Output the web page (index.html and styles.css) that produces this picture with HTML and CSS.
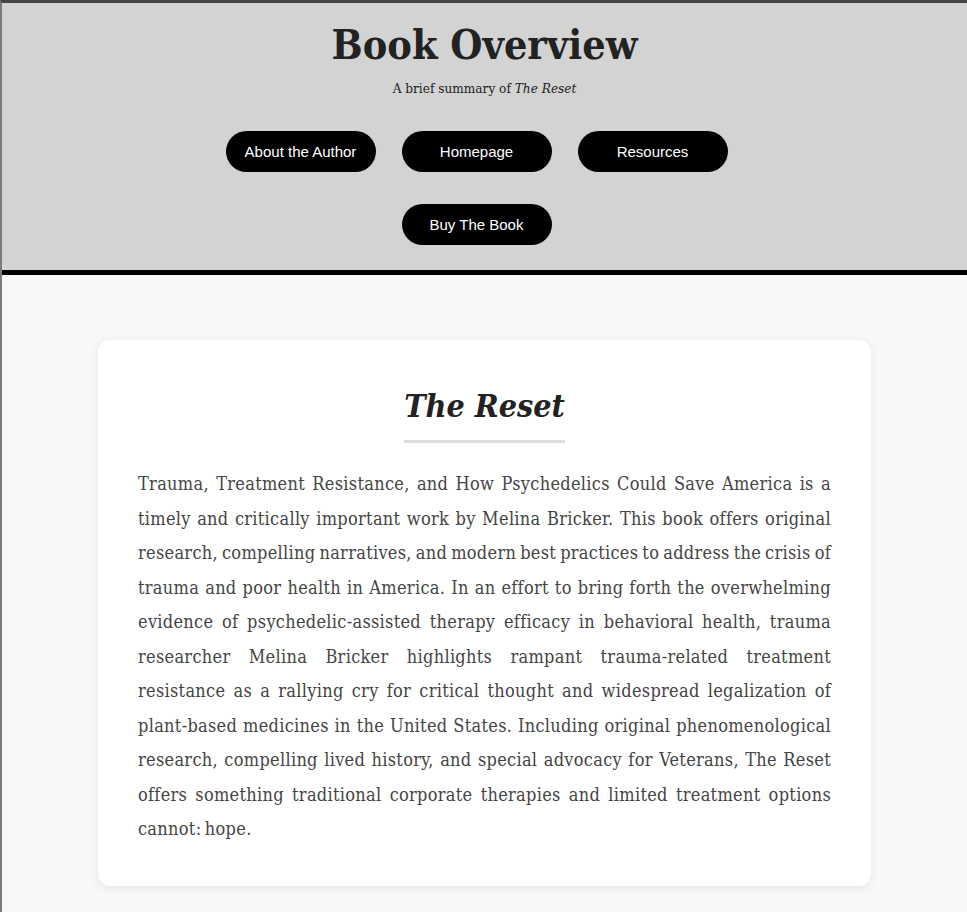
FILE: index.html
```html
<!DOCTYPE html>
<html lang="en">
<head>
<meta charset="utf-8">
<title>Book Overview</title>
<link rel="stylesheet" href="styles.css">
</head>
<body>
<div class="page">
  <header class="site-header">
    <h1 class="site-title">Book Overview</h1>
    <p class="site-subtitle">A brief summary of <em>The Reset</em></p>
    <nav class="nav">
      <a class="nav-btn" href="#">About the Author</a>
      <a class="nav-btn" href="#">Homepage</a>
      <a class="nav-btn" href="#">Resources</a>
      <a class="nav-btn" href="#">Buy The Book</a>
    </nav>
  </header>
  <main class="main">
    <section class="card">
      <div class="card-head">
        <h2 class="card-title">The Reset</h2>
      </div>
      <p class="card-text">Trauma, Treatment Resistance, and How Psychedelics Could Save America is a timely and critically important work by Melina Bricker. This book offers original research, compelling narratives, and modern best practices to address the crisis of trauma and poor health in America. In an effort to bring forth the overwhelming evidence of psychedelic-assisted therapy efficacy in behavioral health, trauma researcher Melina Bricker highlights rampant trauma-related treatment resistance as a rallying cry for critical thought and widespread legalization of plant-based medicines in the United States. Including original phenomenological research, compelling lived history, and special advocacy for Veterans, The Reset offers something traditional corporate therapies and limited treatment options cannot: hope.</p>
    </section>
  </main>
</div>
</body>
</html>
```

FILE: styles.css
```css
html, body {
  margin: 0;
  padding: 0;
}
body {
  background: #f8f8f8;
  font-family: "DejaVu Serif", "Liberation Serif", serif;
  font-stretch: condensed;
  color: #222;
}
.page {
  border-top: 3px solid #454545;
  border-left: 2px solid #7a7a7a;
  min-height: 909px;
}
.site-header {
  background: #d3d3d3;
  border-bottom: 5px solid #000;
  padding: 18px 0 25px;
  text-align: center;
}
.site-title {
  margin: 0;
  font-size: 41px;
  line-height: 48px;
  font-weight: bold;
  color: #222;
}
.site-subtitle {
  margin: 9px 0 0;
  font-size: 13.5px;
  line-height: 20px;
  color: #222;
}
.nav {
  margin: 33px auto 0;
  width: 502px;
  padding-right: 16px;
  display: flex;
  flex-wrap: wrap;
  justify-content: center;
  column-gap: 26px;
  row-gap: 32px;
}
.nav-btn {
  width: 150px;
  height: 41px;
  border-radius: 21px;
  background: #000;
  color: #fff;
  text-decoration: none;
  font-family: "Liberation Sans", Arial, sans-serif;
  font-stretch: normal;
  font-size: 15px;
  display: flex;
  align-items: center;
  justify-content: center;
}
.main {
  padding: 65px 0 26px;
}
.card {
  width: 773px;
  box-sizing: border-box;
  margin: 0 auto;
  background: #fff;
  border-radius: 12px;
  box-shadow: 0 2px 10px rgba(0, 0, 0, 0.08);
  padding: 44px 40px 39px;
}
.card-head {
  text-align: center;
}
.card-title {
  display: inline-block;
  margin: 0;
  font-size: 32px;
  line-height: 44px;
  font-style: italic;
  font-weight: bold;
  color: #222;
  padding-bottom: 12px;
  border-bottom: 3px solid #ddd;
}
.card-text {
  margin: 24px 0 0;
  font-size: 18px;
  line-height: 34.5px;
  letter-spacing: 0.3px;
  word-spacing: -2px;
  text-align: justify;
  color: #444;
}
```
